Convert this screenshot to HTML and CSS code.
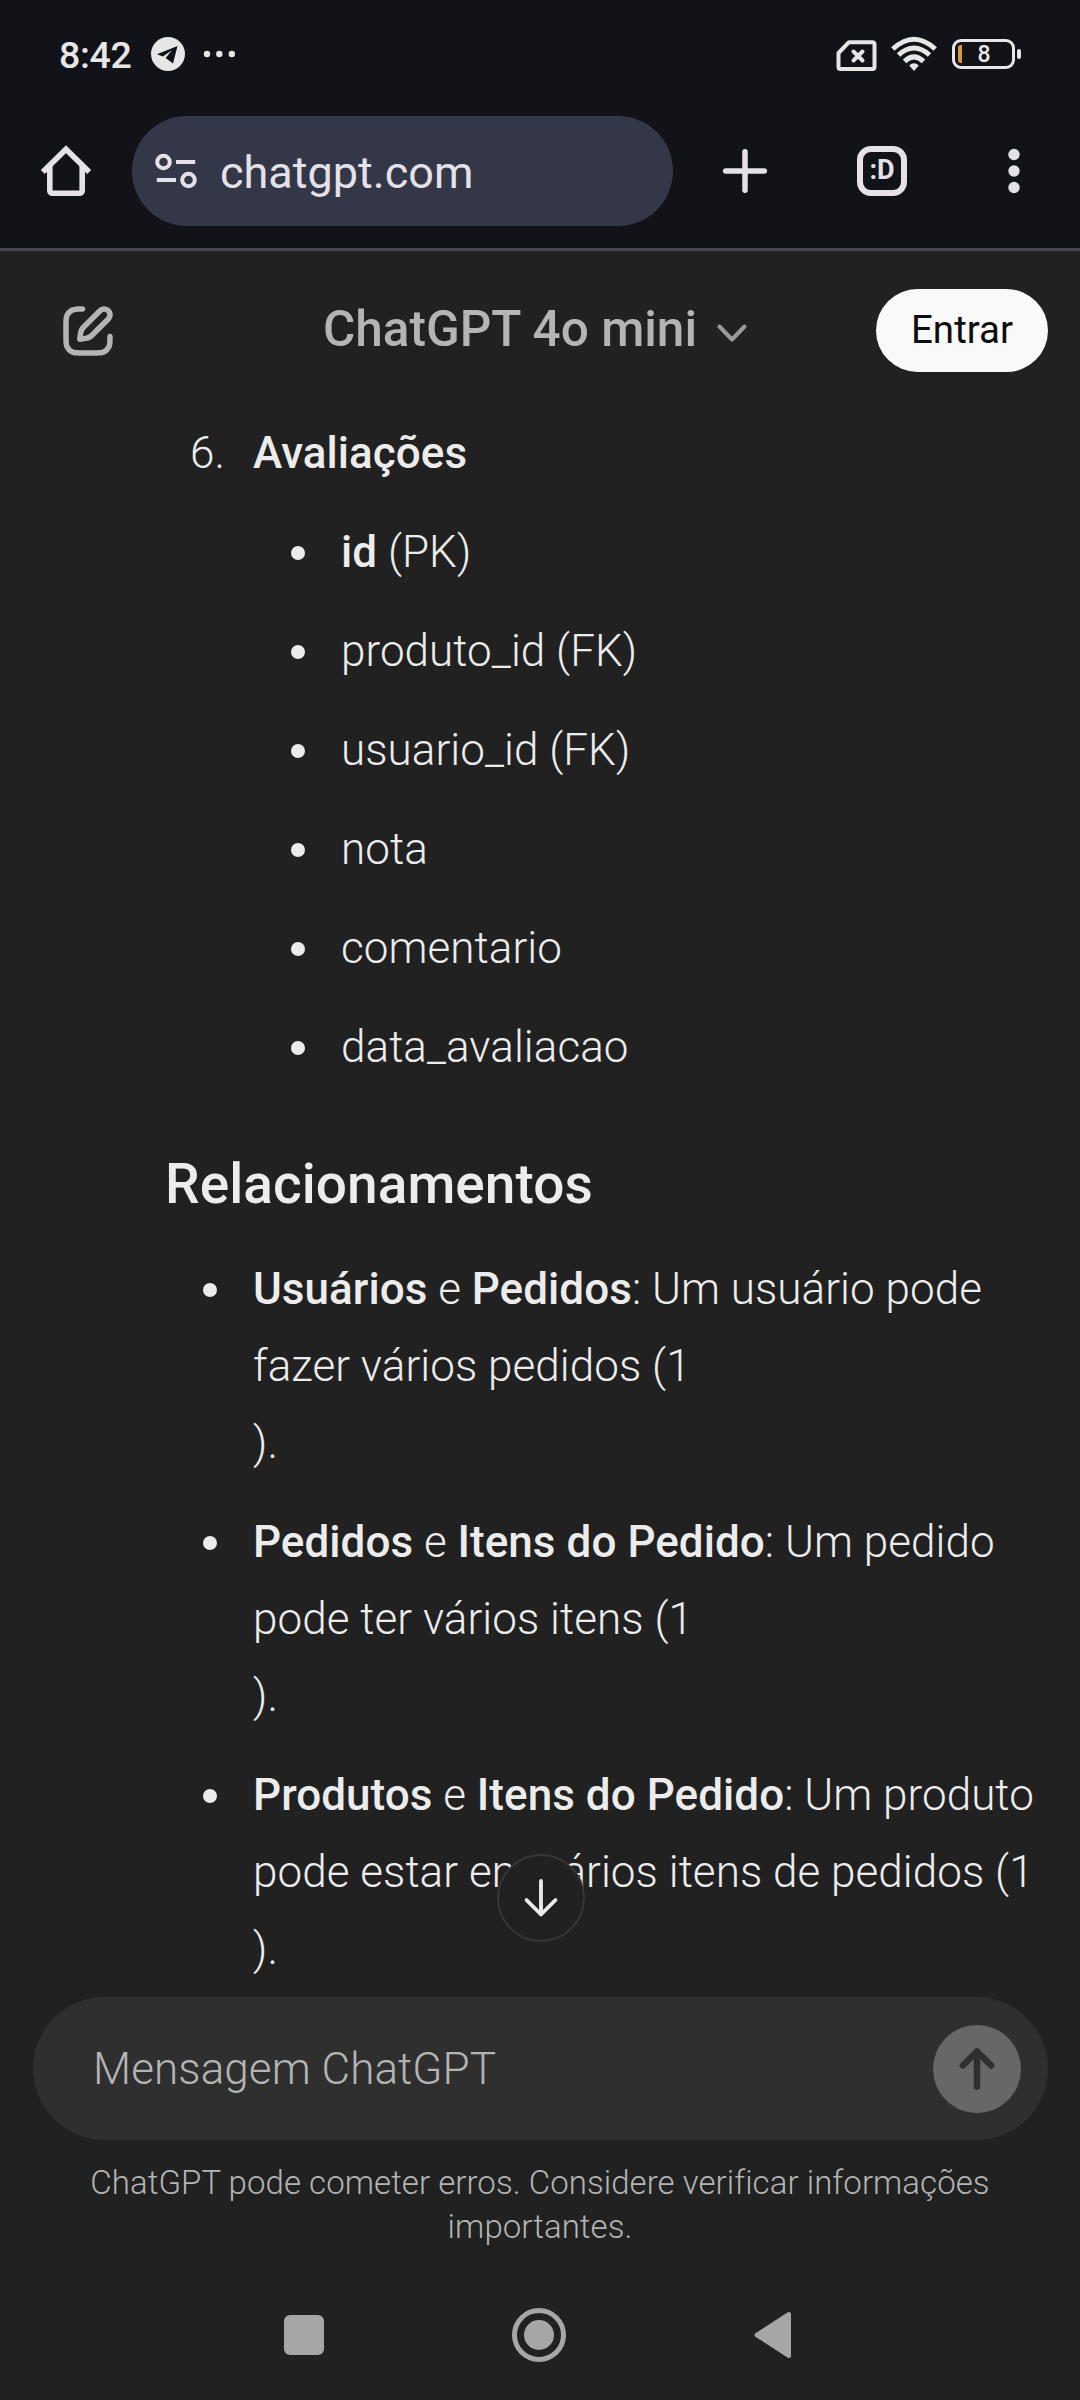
FILE: index.html
```html
<!DOCTYPE html>
<html lang="pt-BR">
<head>
<meta charset="utf-8">
<title>ChatGPT</title>
<link rel="stylesheet" href="styles.css">
</head>
<body>
<div class="screen">
  <div class="status-bar">
    <span class="clock">8:42</span>
    <svg class="telegram" width="34" height="34" viewBox="0 0 34 34"><circle cx="17" cy="17" r="17" fill="#e6e6e6"/><path d="M6 17.2 26.5 9 22 26.5l-7.4-5.600 6.400-7.600-9.200 6.200z" fill="#121318"/></svg>
    <svg class="more-notifications" width="32" height="8" viewBox="0 0 32 8" fill="#e6e6e6"><circle cx="4" cy="4" r="3.200"/><circle cx="16.300" cy="4" r="3.200"/><circle cx="28.800" cy="4" r="3.200"/></svg>
    <svg class="no-sim" width="41" height="32" viewBox="0 0 41 32" fill="none" stroke="#e6e6e6" stroke-width="4"><path d="M13 2.200H36.500a2 2 0 0 1 2 2V27a2 2 0 0 1-2 2H4.500a2 2 0 0 1-2-2V13z" stroke-linejoin="round"/><path d="m17.500 11.500 9 9m0-9-9 9" stroke-linecap="round"/></svg>
    <svg class="wifi" width="46" height="36" viewBox="0 0 46 36" fill="none" stroke="#e6e6e6" stroke-width="5"><path d="M1.800 13Q23-6.500 44.200 13"/><path d="M7.500 19Q23 5 38.500 19"/><path d="M13.500 25.300Q23 16.500 32.500 25.300"/><path d="M18.200 29.500Q23 25 27.800 29.500L23 35z" fill="#e6e6e6" stroke="none"/></svg>
    <div class="battery"><span class="battery-level"></span><span class="battery-text">8</span></div><span class="battery-tip"></span>
  </div>

  <div class="toolbar">
    <svg class="home" width="52" height="52" viewBox="0 0 52 52" fill="none" stroke="#e4e1e9" stroke-width="5.600"><path d="M2.800 27 26 4.200 49.200 27"/><path d="M9.800 21v24.500a2.700 2.700 0 0 0 2.700 2.700h27a2.700 2.700 0 0 0 2.700-2.700V21"/></svg>
    <div class="address">
      <svg width="42" height="36" viewBox="0 0 42 36" fill="none" stroke="#e4e1e9" stroke-width="4"><circle cx="8.500" cy="9" r="6.300"/><circle cx="33.500" cy="27" r="6.300"/><path d="M21 9h19.200M1.800 27H21"/></svg>
      <span>chatgpt.com</span>
    </div>
    <svg class="new-tab" width="46" height="46" viewBox="0 0 46 46" stroke="#e4e1e9" stroke-width="5.500" stroke-linecap="round"><path d="M23 3.700v38.600M3.700 23h38.600"/></svg>
    <div class="tabs">:D</div>
    <svg class="menu" width="12" height="46" viewBox="0 0 12 46" fill="#e4e1e9"><circle cx="6" cy="6.500" r="5.700"/><circle cx="6" cy="23" r="5.700"/><circle cx="6" cy="39.500" r="5.700"/></svg>
  </div>

  <header class="header">
    <svg class="compose" width="66" height="66" viewBox="0 0 24 24" fill="#b4b4b4"><path d="M15.6729 3.91287C16.8918 2.69392 18.8682 2.69392 20.0871 3.91287C21.3061 5.13182 21.3061 7.10813 20.0871 8.32708L14.1499 14.2643C13.3849 15.0293 12.3925 15.5255 11.3215 15.6785L9.14142 15.9899C8.82983 16.0344 8.51546 15.9297 8.29289 15.7071C8.07033 15.4845 7.96554 15.1701 8.01005 14.8586L8.32149 12.6785C8.47449 11.6075 8.97072 10.615 9.7357 9.85006L15.6729 3.91287ZM18.6729 5.32708C18.235 4.88918 17.525 4.88918 17.0871 5.32708L11.1499 11.2643C10.6909 11.7233 10.3932 12.3187 10.3014 12.9613L10.1785 13.8215L11.0386 13.6986C11.6812 13.6068 12.2767 13.3091 12.7357 12.8501L18.6729 6.91287C19.1108 6.47497 19.1108 5.76499 18.6729 5.32708ZM11 3.99929C11.0004 4.55157 10.5531 4.99963 10.0008 5.00007C9.00227 5.00084 8.29769 5.00827 7.74651 5.06064C7.20685 5.11191 6.88488 5.20117 6.63803 5.32695C6.07354 5.61457 5.6146 6.07351 5.32698 6.63799C5.19279 6.90135 5.10062 7.24904 5.05118 7.8542C5.00078 8.47105 5 9.26336 5 10.4V13.6C5 14.7366 5.00078 15.5289 5.05118 16.1457C5.10062 16.7509 5.19279 17.0986 5.32698 17.3619C5.6146 17.9264 6.07354 18.3854 6.63803 18.673C6.90138 18.8072 7.24907 18.8993 7.85424 18.9488C8.47108 18.9992 9.26339 19 10.4 19H13.6C14.7366 19 15.5289 18.9992 16.1458 18.9488C16.7509 18.8993 17.0986 18.8072 17.362 18.673C17.9265 18.3854 18.3854 17.9264 18.673 17.3619C18.7988 17.1151 18.8881 16.7931 18.9393 16.2535C18.9917 15.7023 18.9991 14.9977 18.9999 13.9992C19.0003 13.4469 19.4484 12.9995 20.0007 13C20.553 13.0004 21.0003 13.4485 20.9999 14.0007C20.9991 14.9789 20.9932 15.7808 20.9304 16.4426C20.8664 17.116 20.7385 17.7136 20.455 18.2699C19.9757 19.2107 19.2108 19.9756 18.27 20.455C17.6777 20.7568 17.0375 20.8826 16.3086 20.9421C15.6008 21 14.7266 21 13.6428 21H10.3572C9.27339 21 8.39925 21 7.69138 20.9421C6.96253 20.8826 6.32234 20.7568 5.73005 20.455C4.78924 19.9756 4.02433 19.2107 3.54497 18.2699C3.24318 17.6776 3.11737 17.0374 3.05782 16.3086C2.99998 15.6007 2.99999 14.7266 3 13.6428V10.3572C2.99999 9.27337 2.99998 8.39922 3.05782 7.69134C3.11737 6.96249 3.24318 6.3223 3.54497 5.73001C4.02433 4.7892 4.78924 4.0243 5.73005 3.54493C6.28633 3.26149 6.88399 3.13358 7.55735 3.06961C8.21919 3.00673 9.02103 3.00083 9.99922 3.00007C10.5515 2.99964 10.9996 3.447 11 3.99929Z"/></svg>
    <h1 class="model">ChatGPT 4o mini</h1>
    <svg class="chevron" width="30" height="20" viewBox="0 0 30 20" fill="none" stroke="#9b9b9b" stroke-width="4" stroke-linecap="round" stroke-linejoin="round"><path d="m2.500 3.500 12.500 13 12.500-13"/></svg>
    <button class="login">Entrar</button>
  </header>

  <main class="messages">
    <div class="numbered">
      <span class="number">6.</span><strong>Avaliações</strong>
    </div>
    <ul class="list fields">
      <li><p><strong>id</strong> (PK)</p></li>
      <li><p>produto_id (FK)</p></li>
      <li><p>usuario_id (FK)</p></li>
      <li><p>nota</p></li>
      <li><p>comentario</p></li>
      <li><p>data_avaliacao</p></li>
    </ul>
    <h2 class="subtitle">Relacionamentos</h2>
    <ul class="list relations">
      <li><p><strong>Usuários</strong> e <strong>Pedidos</strong>: Um usuário pode<br>fazer vários pedidos (1<br>).</p></li>
      <li><p><strong>Pedidos</strong> e <strong>Itens do Pedido</strong>: Um pedido<br>pode ter vários itens (1<br>).</p></li>
      <li><p><strong>Produtos</strong> e <strong>Itens do Pedido</strong>: Um produto<br>pode estar em vários itens de pedidos (1<br>).</p></li>
    </ul>
    <div class="scroll-down">
      <svg width="36" height="40" viewBox="0 0 36 40" fill="none" stroke="#ececec" stroke-width="3.800" stroke-linecap="round" stroke-linejoin="round"><path d="M18 3v33.500M3.500 22 18 36.500 32.500 22"/></svg>
    </div>
  </main>

  <div class="composer">
    <span class="placeholder">Mensagem ChatGPT</span>
    <div class="send">
      <svg width="36" height="44" viewBox="0 0 36 44" fill="none" stroke="#2f2f2f" stroke-width="6.500" stroke-linecap="round" stroke-linejoin="round"><path d="M18 39.500V4.500M3.800 18.500 18 4.500 32.200 18.500"/></svg>
    </div>
  </div>
  <p class="disclaimer">ChatGPT pode cometer erros. Considere verificar informações importantes.</p>

  <nav class="system-nav">
    <span class="recents"></span>
    <span class="home-button"></span>
    <svg class="back" width="38" height="48" viewBox="0 0 38 48" fill="#a6a6a6" stroke="#a6a6a6" stroke-width="4" stroke-linejoin="round"><path d="M2.500 24 35 3v42z"/></svg>
  </nav>
</div>
</body>
</html>
```
FILE: styles.css
```css
* { box-sizing: border-box; }

body {
  margin: 0;
  background: #212121;
  color: #ececec;
  font-family: Roboto, sans-serif;
  font-weight: 310;
}

h1, h2, p, ul { margin: 0; padding: 0; }
svg { display: block; flex: none; }

.screen {
  display: flex;
  flex-direction: column;
  width: 1080px;
  height: 2400px;
  overflow: hidden;
}

/* System status bar */
.status-bar {
  display: flex;
  align-items: center;
  flex: none;
  height: 108px;
  padding: 0 59px;
  background: #121318;
}
.clock {
  width: 92px;
  padding-top: 2px;
  color: #e6e6e6;
  font-size: 37.5px;
  font-weight: 500;
  letter-spacing: -0.3px;
}
.more-notifications { margin-left: 18px; }
.no-sim { margin: 3px 0 0 auto; }
.wifi { margin-left: 14px; }
.battery {
  display: flex;
  align-items: center;
  width: 63px;
  height: 30px;
  margin-left: 15px;
  padding-left: 3px;
  border: 3px solid #e6e6e6;
  border-radius: 9px;
}
.battery-level {
  width: 4px;
  height: 18px;
  border-radius: 3px 0 0 3px;
  background: #d99a31;
}
.battery-text {
  width: 44px;
  padding-top: 2px;
  color: #e6e6e6;
  font-size: 23px;
  font-weight: 500;
  line-height: 24px;
  text-align: center;
}
.battery-tip {
  width: 4px;
  height: 10px;
  margin-left: 2px;
  border-radius: 2px;
  background: #e6e6e6;
}

/* Browser toolbar */
.toolbar {
  display: flex;
  align-items: center;
  flex: none;
  height: 143px;
  padding: 0 60px 14px 40px;
  border-bottom: 3px solid #46474d;
  background: #121318;
}
.address {
  display: flex;
  align-items: center;
  gap: 23px;
  width: 541px;
  height: 110px;
  margin-left: 40px;
  padding-left: 23px;
  border-radius: 55px;
  background: #343748;
  color: #e4e1e9;
  font-size: 45px;
  font-weight: 400;
}
.address span { padding-top: 2px; }
.new-tab { margin-left: 49px; }
.tabs {
  width: 50px;
  height: 50px;
  margin-left: 89px;
  border: 6px solid #e4e1e9;
  border-radius: 14px;
  color: #e4e1e9;
  font-size: 27px;
  font-weight: 700;
  line-height: 37px;
  text-align: center;
}
.menu { margin-left: 101px; }

/* Page header */
.header {
  display: flex;
  align-items: center;
  flex: none;
  height: 160px;
  padding: 0 32px 0 55px;
}
.model {
  width: 372px;
  margin-left: 202px;
  padding-bottom: 4px;
  color: #b4b4b4;
  font-size: 49.5px;
  font-weight: 500;
  white-space: nowrap;
}
.chevron { margin: 3px 0 0 22px; }
.login {
  width: 172px;
  height: 83px;
  margin: 0 0 2px auto;
  padding: 0 0 1px;
  border: 0;
  border-radius: 42px;
  background: #f9f9f9;
  color: #0d0d0d;
  font: 400 38.5px Roboto, sans-serif;
}

/* Conversation */
.messages {
  position: relative;
  flex: 1;
  padding: 4px 0 0 165px;
  font-size: 44px;
  line-height: 77px;
  letter-spacing: 0.05px;
}
strong { font-weight: 550; }
.numbered { display: flex; }
.number { width: 88px; padding-left: 25px; }
.list {
  display: flex;
  flex-direction: column;
  gap: 22px;
  list-style: none;
}
.list li { display: flex; white-space: nowrap; }
.list li::before {
  content: "";
  flex: none;
  width: 14px;
  height: 14px;
  margin: 32px 36px 0 38px;
  border-radius: 50%;
  background: #ececec;
}
.fields { padding: 22px 0 0 88px; }
.subtitle {
  margin-top: 54px;
  font-size: 55px;
  font-weight: 500;
  line-height: 88px;
}
.relations { padding-top: 23px; }
.scroll-down {
  position: absolute;
  top: 1443px;
  left: 497px;
  display: flex;
  align-items: center;
  justify-content: center;
  width: 88px;
  height: 88px;
  border: 2px solid #373737;
  border-radius: 50%;
  background: #212121;
}

/* Message composer */
.composer {
  display: flex;
  align-items: center;
  justify-content: space-between;
  flex: none;
  height: 143px;
  margin: 0 32px 0 33px;
  padding: 0 27px 0 60px;
  border-radius: 72px;
  background: #2f2f2f;
}
.placeholder { color: #b4b4b4; font-size: 44px; letter-spacing: 0.08px; }
.send {
  display: flex;
  align-items: center;
  justify-content: center;
  width: 88px;
  height: 88px;
  border-radius: 50%;
  background: #676767;
}
.disclaimer {
  flex: none;
  height: 130px;
  padding: 21px 60px 0;
  color: #b4b4b4;
  font-size: 33px;
  line-height: 44px;
  letter-spacing: 0.05px;
  text-align: center;
}

/* System navigation */
.system-nav {
  display: flex;
  align-items: center;
  flex: none;
  height: 130px;
  padding-left: 284px;
}
.recents {
  width: 40px;
  height: 40px;
  border-radius: 6px;
  background: #a6a6a6;
}
.home-button {
  width: 54px;
  height: 54px;
  margin-left: 188px;
  padding: 7px;
  border: 5px solid #a6a6a6;
  border-radius: 50%;
  background: #a6a6a6 content-box;
}
.back { margin-left: 188px; }
```
